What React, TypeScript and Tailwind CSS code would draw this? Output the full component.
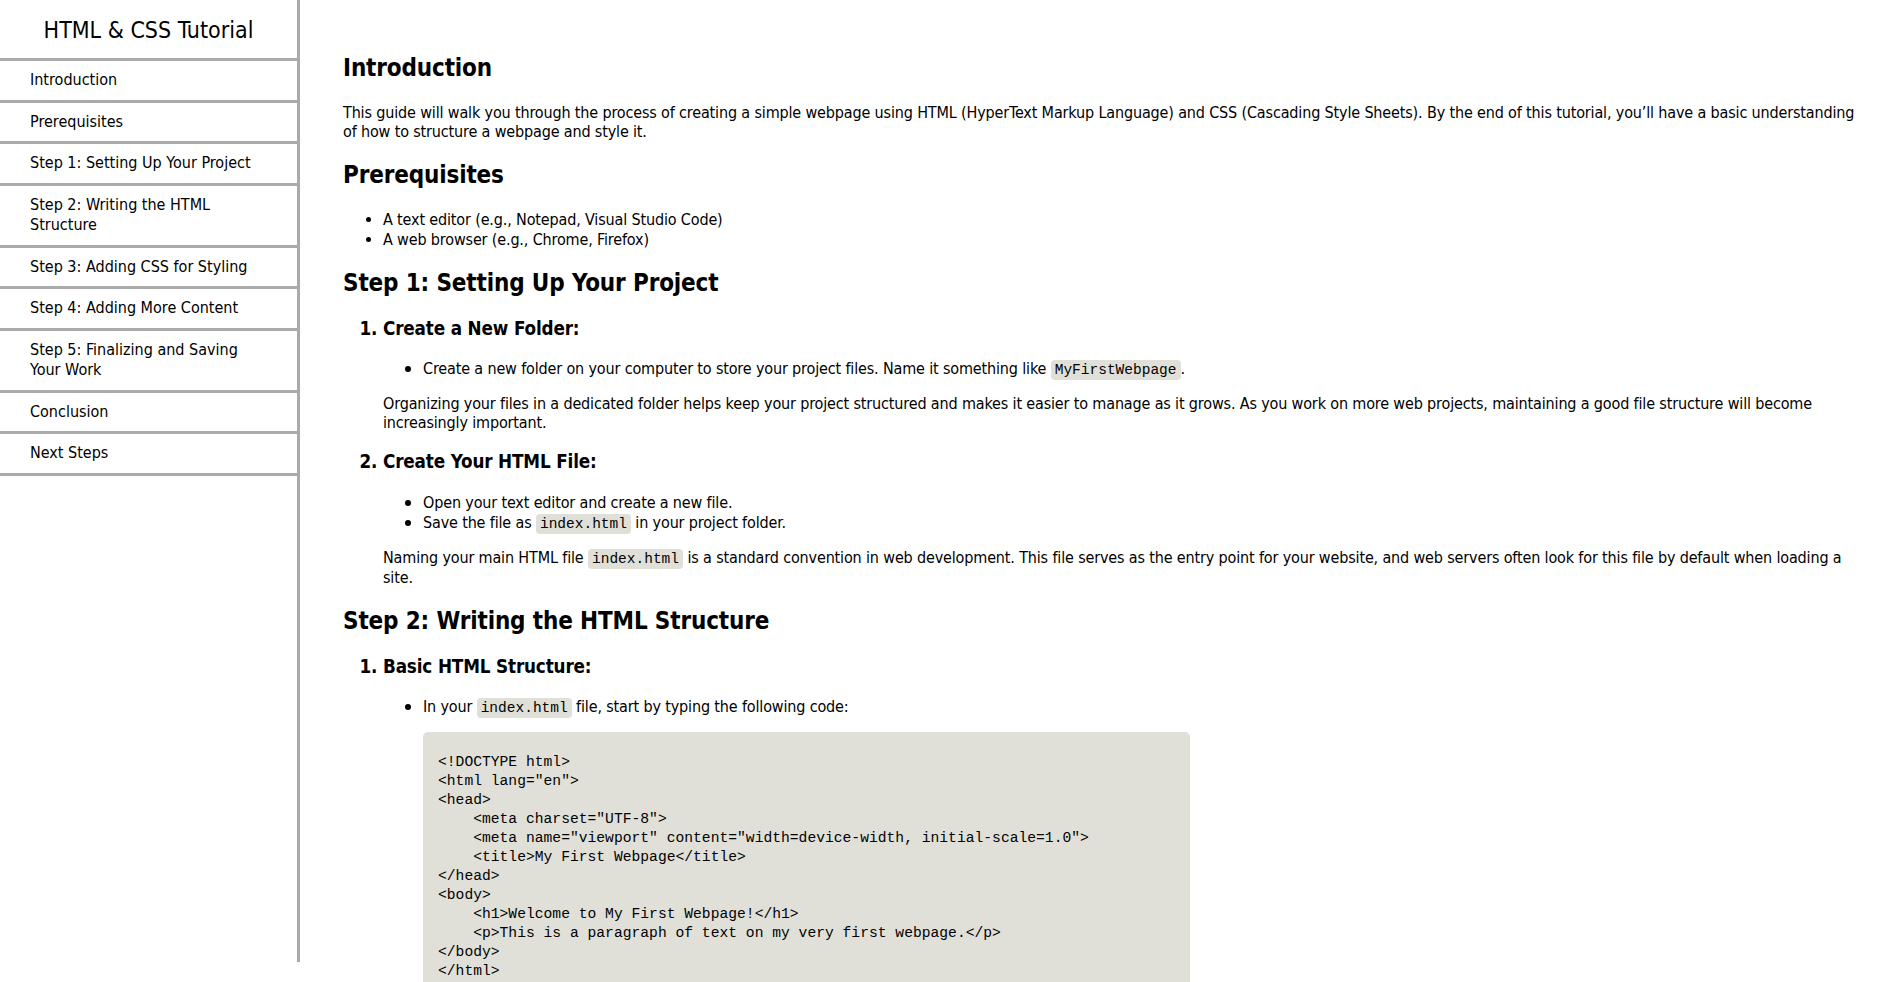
import React from "react";

const navItems = [
  "Introduction",
  "Prerequisites",
  "Step 1: Setting Up Your Project",
  "Step 2: Writing the HTML Structure",
  "Step 3: Adding CSS for Styling",
  "Step 4: Adding More Content",
  "Step 5: Finalizing and Saving Your Work",
  "Conclusion",
  "Next Steps",
];

const codeSample = `<!DOCTYPE html>
<html lang="en">
<head>
    <meta charset="UTF-8">
    <meta name="viewport" content="width=device-width, initial-scale=1.0">
    <title>My First Webpage</title>
</head>
<body>
    <h1>Welcome to My First Webpage!</h1>
    <p>This is a paragraph of text on my very first webpage.</p>
</body>
</html>`;

function Code({ children }: { children: React.ReactNode }) {
  return (
    <code className="rounded-[4px] bg-[#e0e0d9] px-[4px] py-[2px] font-['Liberation_Mono',monospace] text-[14.5px] leading-none tracking-normal">
      {children}
    </code>
  );
}

function H2({ children }: { children: React.ReactNode }) {
  return <h2 className="my-[19.92px] text-[24px] font-bold leading-[29px]">{children}</h2>;
}

function H3({ children }: { children: React.ReactNode }) {
  return <h3 className="my-[18.72px] text-[18.72px] font-bold leading-[21.5px]">{children}</h3>;
}

function Sidebar() {
  return (
    <aside className="h-[962px] w-[300px] shrink-0 self-start border-r-[3px] border-[#aaaaaa] bg-white">
      <div className="flex h-[61px] items-center justify-center border-b-[3px] border-[#aaaaaa] pt-[1px] text-[23px] leading-[28px]">
        HTML &amp; CSS Tutorial
      </div>
      <nav>
        {navItems.map((label) => (
          <a
            key={label}
            href="#"
            className="block border-b-[3px] border-[#aaaaaa] px-[30px] py-[9px] text-[16px] leading-[20.5px] text-black hover:bg-[#f0f0f0]"
          >
            {label}
          </a>
        ))}
      </nav>
    </aside>
  );
}

export default function App() {
  return (
    <div className="flex h-screen overflow-hidden bg-white font-['DejaVu_Sans_Condensed','Liberation_Sans',sans-serif] text-[16px] leading-[19.3px] text-black">
      <Sidebar />
      <main className="min-w-0 flex-1 pt-[34px] pr-10 pl-[43px] tracking-[-0.15px]">
        <H2>Introduction</H2>
        <p className="my-4">
          This guide will walk you through the process of creating a simple webpage using HTML (HyperText Markup
          Language) and CSS (Cascading Style Sheets). By the end of this tutorial, you’ll have a basic understanding of
          how to structure a webpage and style it.
        </p>

        <H2>Prerequisites</H2>
        <ul className="my-4 list-disc pl-10">
          <li>A text editor (e.g., Notepad, Visual Studio Code)</li>
          <li>A web browser (e.g., Chrome, Firefox)</li>
        </ul>

        <H2>Step 1: Setting Up Your Project</H2>
        <ol className="my-4 list-decimal pl-10 marker:text-[18.72px] marker:font-bold">
          <li>
            <H3>Create a New Folder:</H3>
            <ul className="list-disc pl-10">
              <li>
                Create a new folder on your computer to store your project files. Name it something like{" "}
                <Code>MyFirstWebpage</Code>.
              </li>
            </ul>
            <p className="my-4">
              Organizing your files in a dedicated folder helps keep your project structured and makes it easier to
              manage as it grows. As you work on more web projects, maintaining a good file structure will become
              increasingly important.
            </p>
          </li>
          <li>
            <H3>Create Your HTML File:</H3>
            <ul className="list-disc pl-10">
              <li>Open your text editor and create a new file.</li>
              <li>
                Save the file as <Code>index.html</Code> in your project folder.
              </li>
            </ul>
            <p className="my-4">
              Naming your main HTML file <Code>index.html</Code> is a standard convention in web development. This file
              serves as the entry point for your website, and web servers often look for this file by default when
              loading a site.
            </p>
          </li>
        </ol>

        <H2>Step 2: Writing the HTML Structure</H2>
        <ol className="my-4 list-decimal pl-10 marker:text-[18.72px] marker:font-bold">
          <li>
            <H3>Basic HTML Structure:</H3>
            <ul className="list-disc pl-10">
              <li>
                In your <Code>index.html</Code> file, start by typing the following code:
                <pre className="mt-4 w-[767px] rounded-[5px] bg-[#e0e0d9] px-[15px] pt-[21px] pb-[15px] font-['Liberation_Mono',monospace] text-[14.67px] leading-[19px] tracking-normal">
                  {codeSample}
                </pre>
              </li>
            </ul>
          </li>
        </ol>
      </main>
    </div>
  );
}
